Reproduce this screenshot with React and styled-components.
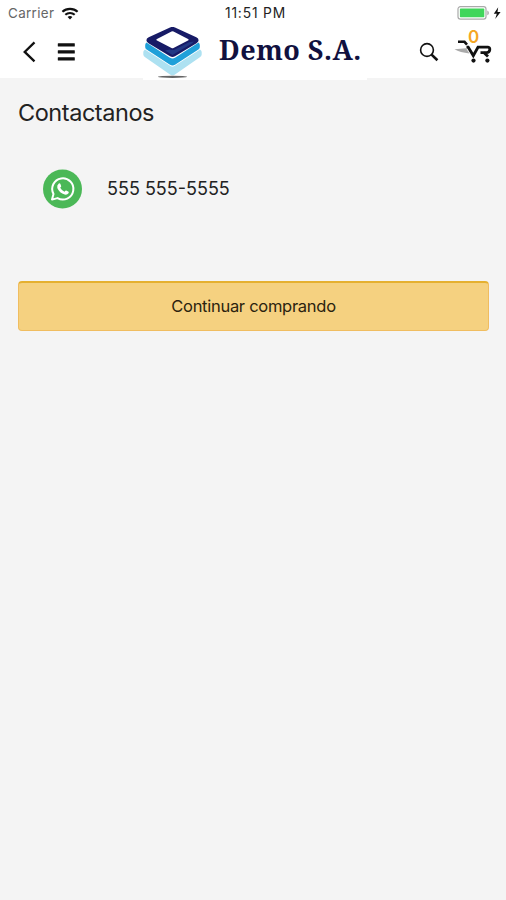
import React from 'react'
import styled, {createGlobalStyle} from "styled-components"


const App = () => {
  return (
    <Screen>
      <GlobalStyle />
      <StatusBar>
        <Carrier>
          <StatusText color="#666">Carrier</StatusText>
          <WifiIcon />
        </Carrier>
        <StatusText color="#222" $time>11:51 PM</StatusText>
        <Power>
          <BatteryIcon />
        </Power>
      </StatusBar>

      <NavBar>
        <NavGroup>
          <BackIcon />
          <MenuIcon />
        </NavGroup>
        <Brand>
          <LogoIcon />
          <BrandName>Demo S.A.</BrandName>
        </Brand>
        <NavActions>
          <SearchIcon />
          <Cart>
            <CartIcon />
            <CartCount>0</CartCount>
          </Cart>
        </NavActions>
      </NavBar>

      <Content>
        <Title>Contactanos</Title>
        <Contact>
          <WhatsAppIcon />
          <Phone>555 555-5555</Phone>
        </Contact>
        <Button>Continuar comprando</Button>
      </Content>
    </Screen>
  );
};

const WifiIcon = () => (
  <svg width="18" height="13" viewBox="0 0 18 13" fill="none" stroke="#111" strokeWidth="2.1">
    <path d="M1.4 4.8C5.6 .9 12.4 .9 16.6 4.8" />
    <path d="M4.3 7.8C7 5.3 11 5.3 13.7 7.8" />
    <path d="M9 12.4L6.6 10C8 8.8 10 8.8 11.4 10Z" fill="#111" stroke="none" />
  </svg>
)

const BatteryIcon = () => (
  <svg width="44" height="14" viewBox="0 0 44 14">
    <rect x="1" y=".7" width="28" height="12.4" rx="2.4" fill="#fff" stroke="#aaa" strokeWidth="1.2" />
    <rect x="2.9" y="2.6" width="24.4" height="8.6" rx=".8" fill="#40d65b" />
    <path d="M30.3 4.5C32.4 5.2 32.4 8.6 30.3 9.3Z" fill="#aaa" />
    <path d="M41.2 1.2L36.8 7.7H39.8L38.2 12.9L43.6 6H40.5Z" fill="#111" />
  </svg>
)

const BackIcon = () => (
  <svg width="14" height="22" viewBox="0 0 14 22" fill="none" stroke="#111" strokeWidth="2.3">
    <path d="M12.5 1.4L2.7 10.9L12.5 20.4" />
  </svg>
)

const MenuIcon = () => (
  <svg width="18" height="18" viewBox="0 0 18 18" fill="#111">
    <rect x=".8" y=".3" width="17" height="3.2" rx=".5" />
    <rect x=".8" y="7.2" width="17" height="3.2" rx=".5" />
    <rect x=".8" y="14.2" width="17" height="3.4" rx=".5" />
  </svg>
)

const LogoIcon = () => (
  <svg width="60" height="52" viewBox="0 0 60 52">
    <path d="M2 22.5Q.3 23.5 .3 25V27.6Q.3 29 1.8 30L27 47.4Q29.5 49.2 32 47.4L57.2 30Q58.7 29 58.7 27.6V25Q58.7 23.5 57 22.5L31.5 39Q29.5 40.3 27.5 39Z" fill="#ade1f1" />
    <path d="M3.4 15.4Q2.2 16.4 2.2 18V20.2Q2.2 21.6 3.6 22.6L27 37.8Q29.5 39.4 32 37.8L55.4 22.6Q56.8 21.6 56.8 20.2V18Q56.8 16.4 55.6 15.4L32 30.8Q29.5 32.4 27 30.8Z" fill="#1fa0d9" />
    <path fillRule="evenodd" d="M27 .5Q29.5 -.7 32 .5L53.3 10.2Q55.6 11.4 55.6 13.2Q55.6 14.8 53.5 16.2L32 29.2Q29.5 30.8 27 29.2L5.5 16.2Q3.4 14.8 3.4 13.2Q3.4 11.4 5.7 10.2ZM28.5 4.5L14 12.1Q12.8 12.8 14 13.6L28.5 21Q29.5 21.5 30.5 21L45 13.6Q46.2 12.8 45 12.1L30.5 4.5Q29.5 4 28.5 4.5Z" fill="#171b66" />
    <path d="M29.5 28L22 23.5L27 22.4Q29.5 23.8 32 22.4L46 15.2L51 14.6L49 16.4Z" fill="#2d55a0" opacity=".5" />
    <ellipse cx="29.5" cy="49.8" rx="14.5" ry="1.1" fill="#666" />
  </svg>
)

const SearchIcon = () => (
  <svg width="20" height="20" viewBox="0 0 20 20" fill="none" stroke="#111">
    <circle cx="8" cy="8" r="6.4" strokeWidth="1.6" />
    <path d="M12.6 12.6L18.4 18.2" strokeWidth="2.6" />
  </svg>
)

const CartIcon = () => (
  <svg width="38" height="24" viewBox="0 0 38 24" fill="none" stroke="#111">
    <path d="M.5 9.2L12 8.2L15.5 13.4Q6 12.4 .5 9.2Z" fill="#aaa" stroke="none" />
    <path d="M4 1.8H10.5L13 4.6" strokeWidth="2.6" />
    <path d="M12.5 7.2H14.2L19.3 15.6L24 7.2H34Q36 7.4 35.8 9.8Q35.4 12.6 32.5 12.6H26.5" strokeWidth="2.8" />
    <path d="M29.8 12.6L34 16.6" strokeWidth="2.8" />
    <circle cx="19.5" cy="20.6" r="2.1" fill="#111" stroke="none" />
    <circle cx="33.4" cy="20.6" r="2.1" fill="#111" stroke="none" />
  </svg>
)

const WhatsAppIcon = () => (
  <svg width="40" height="40" viewBox="0 0 40 40">
    <circle cx="20.5" cy="20" r="19.5" fill="#4bb857" />
    <path d="M10 30.6L11.5 25A10.6 10.6 0 1 1 15.5 29.1Z" fill="none" stroke="#fff" strokeWidth="2" strokeLinejoin="round" />
    <path d="M16.8 14.4Q17.8 13.8 18.3 14.8L19.2 17Q19.4 17.8 18.2 18.8Q19.7 21.5 22.5 22.8Q23.6 21.3 24.2 21.5L26.6 22.8Q27 23.2 26.5 24.3Q25.2 26.2 22.7 25.6Q17.5 24 15.3 19Q14.7 16 16.8 14.4Z" fill="#fff" />
  </svg>
)

const GlobalStyle = createGlobalStyle`
  body {
    margin: 0;
    background: #f4f4f4;
  }
  svg {
    display: block;
    flex: none;
  }
`

const Screen = styled.div`
  min-height: 900px;
  background: #f4f4f4;
  font-family: Inter, "Liberation Sans", sans-serif;
  color: #222;
`

const StatusBar = styled.div`
  display: grid;
  grid-template-columns: 1fr auto 1fr;
  align-items: center;
  box-sizing: border-box;
  height: 26px;
  padding: 0 5px 0 8px;
  background: #fff;
`

const StatusText = styled.span`
  font-size: ${props => props.$time ? "13.8px" : "13.4px"};
  line-height: 26px;
  letter-spacing: ${props => props.$time ? "0.85px" : "0.35px"};
  margin-left: ${props => props.$time ? "2px" : "0"};
  color: ${props => props.color};
`

const Carrier = styled.div`
  display: flex;
  align-items: center;
  gap: 7px;
`

const Power = styled.div`
  display: flex;
  justify-content: flex-end;
`

const NavBar = styled.div`
  display: flex;
  box-sizing: border-box;
  height: 52px;
  padding: 0 14px 0 22px;
  background: #fff;
`

const NavGroup = styled.div`
  display: flex;
  align-items: center;
  gap: 21px;
  width: 121px;
`

/* the logo plate hangs slightly below the bar */
const Brand = styled.div`
  display: flex;
  gap: 16px;
  box-sizing: border-box;
  width: 224px;
  height: 54px;
  padding-top: 1px;
  background: #fff;
`

const BrandName = styled.span`
  font-family: "Noto Serif", "DejaVu Serif Condensed", "DejaVu Serif", serif;
  font-size: 27px;
  font-weight: bold;
  line-height: 45px;
  letter-spacing: 0.5px;
  white-space: nowrap;
  color: #11113f;
`

const NavActions = styled.div`
  display: flex;
  align-items: center;
  gap: 15px;
  margin-left: auto;
`

const Cart = styled.div`
  position: relative;
`

const CartCount = styled.span`
  position: absolute;
  top: -13px;
  left: 14px;
  font-size: 17px;
  font-weight: 600;
  line-height: 20px;
  color: #f5a623;
`

const Content = styled.div`
  display: flex;
  flex-direction: column;
  padding: 19px 17px 0 18px;
`

const Title = styled.h1`
  margin: 0;
  font-size: 23.5px;
  font-weight: 400;
  line-height: 32px;
  letter-spacing: -0.45px;
`

const Contact = styled.div`
  display: flex;
  align-items: center;
  gap: 25px;
  margin: 40px 0 72px 24px;
`

const Phone = styled.span`
  font-size: 18px;
  line-height: 24px;
`

const Button = styled.button`
  height: 50px;
  padding: 0 0 2px;
  border: 1px solid #f0bd60;
  border-top: 2px solid #e5b030;
  border-radius: 4px;
  background: #f5d180;
  font-family: inherit;
  font-size: 16.5px;
  letter-spacing: -0.28px;
  color: #2b230f;
`

export default App;
